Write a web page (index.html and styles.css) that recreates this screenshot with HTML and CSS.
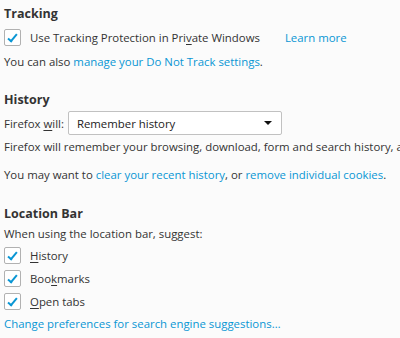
FILE: index.html
```html
<!DOCTYPE html>
<html lang="en">
<head>
  <meta charset="UTF-8">
  <title>Privacy</title>
  <link rel="stylesheet" href="styles.css">
</head>
<body>
  <section class="group tracking">
    <h2>Tracking</h2>
    <div class="row">
      <label class="check"><span class="box checked"></span>Use Tracking Protection in Pri<u>v</u>ate Windows</label>
      <a class="link learn" href="#">Learn more</a>
    </div>
    <p>You can also <a class="link" href="#">manage your Do Not Track settings</a>.</p>
  </section>

  <section class="group history">
    <h2>History</h2>
    <div class="row">
      <span>Firefox <u>w</u>ill:</span>
      <div class="select">
        <span>Remember history</span>
        <span class="arrow"></span>
      </div>
    </div>
    <p class="clip">Firefox will remember your browsing, download, form and search history, and keep cookies from websites you visit.</p>
    <p class="spaced">You may want to <a class="link" href="#">clear your recent history</a>, or <a class="link" href="#">remove individual cookies</a>.</p>
  </section>

  <section class="group location">
    <h2>Location Bar</h2>
    <p>When using the location bar, suggest:</p>
    <label class="check"><span class="box checked"></span><u>H</u>istory</label>
    <label class="check"><span class="box checked"></span>Boo<u>k</u>marks</label>
    <label class="check"><span class="box checked"></span><u>O</u>pen tabs</label>
    <a class="link" href="#">Change preferences for search engine suggestions…</a>
  </section>
</body>
</html>
```

FILE: styles.css
```css
body {
  margin: 0;
  padding: 0 0 0 4px;
  background-color: #fbfbfb;
  color: #333333;
  font-family: "Open Sans", "Noto Sans", sans-serif;
  font-size: 11.4px;
  overflow: hidden;
  white-space: nowrap;
}
h2 {
  margin: 0;
  font-size: 12.5px;
  font-weight: bold;
  color: #333333;
  line-height: 18px;
}
p {
  margin: 0;
  line-height: 18px;
}
u {
  text-decoration-thickness: 1px;
  text-underline-offset: 2px;
}
.group {
  display: flex;
  flex-direction: column;
  align-items: flex-start;
}
.tracking {
  padding-top: 5px;
}
.tracking p {
  margin-top: 4px;
}
.history {
  margin-top: 20px;
}
.location {
  margin-top: 21px;
}
.row {
  display: flex;
  align-items: center;
  margin-top: 3px;
}
.link {
  color: #0996d4;
  text-decoration: none;
}
.learn {
  margin-left: 25px;
}
.check {
  display: flex;
  align-items: center;
  height: 23px;
}
.box {
  width: 15px;
  height: 15px;
  border: 1px solid #b1b1b1;
  border-radius: 2px;
  background-color: #ffffff;
  margin-right: 9px;
  position: relative;
}
.box.checked::after {
  content: "";
  position: absolute;
  left: 5px;
  top: 2px;
  width: 3px;
  height: 8px;
  border-right: 2px solid #0996d4;
  border-bottom: 2px solid #0996d4;
  transform: rotate(40deg);
}
.select {
  box-sizing: border-box;
  display: flex;
  align-items: center;
  justify-content: space-between;
  width: 214px;
  height: 24px;
  margin-left: 4px;
  padding: 0 9px 0 8px;
  border: 1px solid #c1c1c1;
  border-radius: 2px;
  background-color: #ffffff;
  color: #222222;
}
.arrow {
  width: 0;
  height: 0;
  border-left: 4px solid transparent;
  border-right: 4px solid transparent;
  border-top: 4px solid #111111;
}
.history .row {
  margin-top: 2px;
}
.history p {
  margin-top: 3px;
}
.history .spaced {
  margin-top: 10px;
}
.clip {
  width: 396px;
  overflow: hidden;
}
.location p {
  margin-top: 2px;
}
.location .check:first-of-type {
  margin-top: 1px;
}
.location .link {
  margin-top: 3px;
}
```
